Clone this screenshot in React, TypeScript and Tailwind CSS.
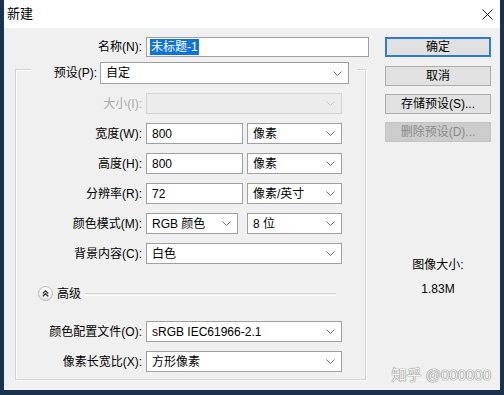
import React from 'react';

const font = "font-['Liberation_Sans','Noto_Sans_CJK_SC',sans-serif]";

function Chevron({ disabled }: { disabled?: boolean }) {
  return (
    <svg width="9" height="5" viewBox="0 0 9 5" className="shrink-0">
      <path d="M0.5 0.5 L4.5 4.5 L8.5 0.5" fill="none" stroke={disabled ? '#c8c8c8' : '#707070'} strokeWidth="1" />
    </svg>
  );
}

function Combo({ value, className, disabled }: { value?: string; className: string; disabled?: boolean }) {
  return (
    <div
      className={`flex items-center justify-between border pl-[5px] pr-[6px] ${
        disabled ? 'border-[#d4d4d4] bg-[#ececec]' : 'border-[#a0a0a0] bg-white'
      } ${className}`}
    >
      <span className="whitespace-nowrap text-black">{value}</span>
      <Chevron disabled={disabled} />
    </div>
  );
}

function TextBox({ value, className }: { value: string; className: string }) {
  return (
    <div className={`flex items-center border border-[#a0a0a0] bg-white pl-[5px] ${className}`}>
      <span className="text-black">{value}</span>
    </div>
  );
}

function Row({ label, children, disabled, className = '' }: { label: string; children: React.ReactNode; disabled?: boolean; className?: string }) {
  return (
    <div className={`flex h-[21px] items-center ${className}`}>
      <div className={`w-[126px] whitespace-nowrap text-right ${disabled ? 'text-[#a8a8a8]' : 'text-black'}`}>{label}</div>
      <div className="ml-[4px] flex items-center">{children}</div>
    </div>
  );
}

function Button({ label, primary, disabled, className = '' }: { label: string; primary?: boolean; disabled?: boolean; className?: string }) {
  return (
    <div
      className={`flex h-[20px] w-[106px] items-center justify-center ${
        primary
          ? 'border-2 border-[#2f7bd0] bg-[#e1e1e1] text-black'
          : disabled
          ? 'border border-[#c4c4c4] bg-[#cccccc] text-[#8a8a8a]'
          : 'border border-[#adadad] bg-[#e1e1e1] text-black'
      } ${className}`}
    >
      {label}
    </div>
  );
}

export default function App() {
  return (
    <div className={`${font} flex h-[395px] w-[504px] flex-col bg-[#19334f] px-[4px] pb-[5px] text-[12px] leading-[16px]`}>
      <div className="flex h-[28px] shrink-0 items-center justify-between bg-white pl-[3px] pr-[7px]">
        <span className="text-[13px] text-black">新建</span>
        <svg width="11" height="11" viewBox="0 0 11 11">
          <path d="M0.5 0.5 L10.5 10.5 M10.5 0.5 L0.5 10.5" stroke="#222" strokeWidth="1" />
        </svg>
      </div>

      <div className="relative flex flex-1 bg-[#f0f0f0] pt-[9px]">
        <div className="w-[366px]">
          <div className="flex h-[20px] items-center">
            <div className="w-[138px] text-right text-black">名称(N):</div>
            <div className="ml-[4px] flex h-[20px] w-[223px] items-center border border-[#a0a0a0] bg-white pl-[3px]">
              <span className="bg-[#0f74d6] px-[1px] text-white">未标题-1</span>
            </div>
          </div>

          <div className="ml-[11px] mt-[12px] h-[311px] w-[351px] border border-[#d3d3d3] shadow-[inset_1px_1px_0_#fff,1px_1px_0_#fff]">
            <div className="-mt-[8px] ml-[15px] flex w-fit items-center bg-[#f0f0f0] pr-[8px]">
              <div className="w-[69px] whitespace-nowrap pr-[3px] text-right text-black">预设(P):</div>
              <Combo value="自定" className="h-[22px] w-[249px]" />
            </div>

            <Row label="大小(I):" disabled className="mt-[9px]">
              <Combo disabled className="h-[21px] w-[196px]" />
            </Row>
            <Row label="宽度(W):" className="mt-[9px]">
              <TextBox value="800" className="h-[21px] w-[97px]" />
              <Combo value="像素" className="ml-[4px] h-[21px] w-[95px]" />
            </Row>
            <Row label="高度(H):" className="mt-[9px]">
              <TextBox value="800" className="h-[21px] w-[97px]" />
              <Combo value="像素" className="ml-[4px] h-[21px] w-[95px]" />
            </Row>
            <Row label="分辨率(R):" className="mt-[9px]">
              <TextBox value="72" className="h-[21px] w-[97px]" />
              <Combo value="像素/英寸" className="ml-[4px] h-[21px] w-[95px]" />
            </Row>
            <Row label="颜色模式(M):" className="mt-[9px]">
              <Combo value="RGB 颜色" className="h-[21px] w-[92px]" />
              <Combo value="8 位" className="ml-[9px] h-[21px] w-[95px]" />
            </Row>
            <Row label="背景内容(C):" className="mt-[9px]">
              <Combo value="白色" className="h-[21px] w-[196px]" />
            </Row>

            <div className="ml-[22px] mr-[29px] mt-[22px] flex h-[15px] items-center">
              <div className="flex h-[15px] w-[15px] items-center justify-center rounded-full border border-[#b9b9b9] bg-gradient-to-b from-white to-[#e2e2e2]">
                <svg width="7" height="7" viewBox="0 0 7 7">
                  <path d="M0.8 3.5 L3.5 0.9 L6.2 3.5 M0.8 6.3 L3.5 3.7 L6.2 6.3" fill="none" stroke="#333" strokeWidth="1.2" />
                </svg>
              </div>
              <span className="ml-[4px] text-black">高级</span>
              <div className="ml-[4px] h-[2px] flex-1 border-t border-[#d3d3d3] shadow-[0_1px_0_#fff]" />
            </div>

            <Row label="颜色配置文件(O):" className="mt-[20px]">
              <Combo value="sRGB IEC61966-2.1" className="h-[21px] w-[196px]" />
            </Row>
            <Row label="像素长宽比(X):" className="mt-[9px]">
              <Combo value="方形像素" className="h-[21px] w-[196px]" />
            </Row>
          </div>
        </div>

        <div className="ml-[15px] flex w-[106px] flex-col items-center">
          <Button label="确定" primary />
          <Button label="取消" className="mt-[9px]" />
          <Button label="存储预设(S)..." className="mt-[8px]" />
          <Button label="删除预设(D)..." disabled className="mt-[8px]" />
          <div className="mt-[115px] text-black">图像大小:</div>
          <div className="mt-[8px] text-black">1.83M</div>
        </div>

        <div className="absolute bottom-[6px] right-[9px] text-[15px] leading-[18px] text-[#f6f6f6] [text-shadow:0_0_1px_#6f6f6f,0_0_1px_#6f6f6f]">
          知乎 @000000
        </div>
      </div>
    </div>
  );
}
